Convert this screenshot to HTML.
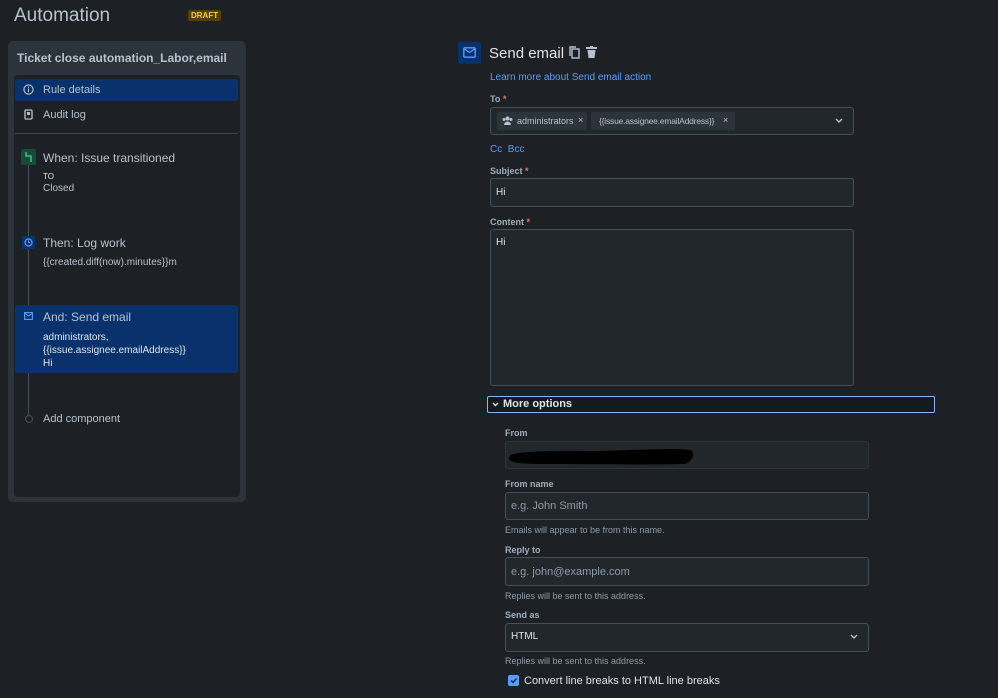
<!DOCTYPE html>
<html><head><meta charset="utf-8"><style>
*{box-sizing:border-box;margin:0;padding:0}
body{width:998px;height:698px;background:#1d2125;font-family:"Liberation Sans",sans-serif;color:#b6c2cf;position:relative;overflow:hidden;font-size:11px}
.a{position:absolute}
.in{position:absolute;background:#22272b;border:1px solid #454f59;border-radius:3px}
.lbl{position:absolute;font-size:9px;font-weight:bold;color:#9fadbc}
.req{color:#f87168}
.help{position:absolute;font-size:9px;color:#8c9bab}
.ph{color:#8c9bab;font-size:11px}
</style></head><body>
<div class="a" style="left:14px;top:5px;font-size:19px;color:#b6c2cf">Automation</div>
<div class="a" style="left:188px;top:10px;background:#533f04;color:#f5cd47;font-size:8px;font-weight:bold;padding:1px 3px;border-radius:2px">DRAFT</div>

<div class="a" style="left:8px;top:41px;width:238px;height:461px;background:#2c333a;border-radius:5px"></div>
<div class="a" style="left:17px;top:51px;font-size:12px;font-weight:bold;color:#b6c2cf">Ticket close automation_Labor,email</div>
<div class="a" style="left:14px;top:75px;width:226px;height:422px;background:#1d2125;border-radius:4px"></div>
<div class="a" style="left:15px;top:79px;width:223px;height:22px;background:#09326c;border-radius:3px"></div>
<svg class="a" style="left:23px;top:84px" width="11" height="11" viewBox="0 0 12 12"><circle cx="6" cy="6" r="5" fill="none" stroke="#b6c2cf" stroke-width="1.3"/><rect x="5.4" y="5" width="1.2" height="4" fill="#b6c2cf"/><rect x="5.4" y="3" width="1.2" height="1.2" fill="#b6c2cf"/></svg>
<div class="a" style="left:43px;top:84px;font-size:11px;color:#b6c2cf">Rule details</div>
<svg class="a" style="left:24px;top:109px" width="9" height="11" viewBox="0 0 9 11"><rect x="1" y="1" width="7" height="9" rx="1" fill="none" stroke="#b6c2cf" stroke-width="1.3"/><rect x="3" y="3" width="3" height="3" fill="#b6c2cf"/></svg>
<div class="a" style="left:43px;top:109px;font-size:11px">Audit log</div>
<div class="a" style="left:15px;top:133px;width:223px;height:1px;background:#3b444c"></div>

<div class="a" style="left:28px;top:160px;width:1px;height:262px;background:#454f59"></div>
<div class="a" style="left:21px;top:149px;width:15px;height:16px;background:#164b35;border-radius:2px"></div>
<svg class="a" style="left:23px;top:151px" width="11" height="12" viewBox="0 0 11 12"><path d="M3 1v4h5v6" fill="none" stroke="#4bce97" stroke-width="1.3"/></svg>
<div class="a" style="left:43px;top:151px;font-size:12px">When: Issue transitioned</div>
<div class="a" style="left:43px;top:172px;font-size:8px;color:#dee4ea">TO</div>
<div class="a" style="left:43px;top:183px;font-size:10px">Closed</div>

<div class="a" style="left:22px;top:236px;width:13px;height:13px;background:#09326c;border-radius:2px"></div>
<svg class="a" style="left:24px;top:238px" width="9" height="9" viewBox="0 0 9 9"><circle cx="4.5" cy="4.5" r="3.5" fill="none" stroke="#579dff" stroke-width="1.2"/><path d="M4.5 2.5v2h1.5" fill="none" stroke="#579dff" stroke-width="1"/></svg>
<div class="a" style="left:43px;top:236px;font-size:12px">Then: Log work</div>
<div class="a" style="left:43px;top:257px;font-size:10px">{{created.diff(now).minutes}}m</div>

<div class="a" style="left:15px;top:305px;width:223px;height:68px;background:#09326c;border-radius:3px"></div>
<svg class="a" style="left:24px;top:312px" width="9" height="8" viewBox="0 0 9 8"><rect x=".6" y=".6" width="7.8" height="6.8" fill="none" stroke="#579dff" stroke-width="1.1"/><path d="M1 1.5l3.5 2.5 3.5-2.5" fill="none" stroke="#579dff" stroke-width="1"/></svg>
<div class="a" style="left:43px;top:310px;font-size:12px">And: Send email</div>
<div class="a" style="left:43px;top:331px;font-size:10px;line-height:13px;color:#dee4ea">administrators,<br>{{issue.assignee.emailAddress}}<br>Hi</div>
<div class="a" style="left:25px;top:415px;width:8px;height:8px;border:1px solid #454f59;border-radius:50%;background:#1d2125"></div>
<div class="a" style="left:43px;top:413px;font-size:11px">Add component</div>

<div class="a" style="left:458px;top:42px;width:23px;height:22px;background:#09326c;border-radius:2px"></div>
<svg class="a" style="left:463px;top:47px" width="13" height="11" viewBox="0 0 13 11"><rect x=".8" y=".8" width="11.4" height="9.4" rx="1" fill="none" stroke="#579dff" stroke-width="1.4"/><path d="M1.5 2l5 3.5 5-3.5" fill="none" stroke="#579dff" stroke-width="1.3"/></svg>
<div class="a" style="left:489px;top:45px;font-size:15px;color:#dee4ea">Send email</div>
<svg class="a" style="left:569px;top:46px" width="11" height="13" viewBox="0 0 11 13"><rect x="3" y="3" width="7" height="9" fill="none" stroke="#b6c2cf" stroke-width="1.4"/><path d="M1 10V1h6" fill="none" stroke="#b6c2cf" stroke-width="1.4"/></svg>
<svg class="a" style="left:586px;top:46px" width="11" height="12" viewBox="0 0 11 12"><rect x="0" y="1" width="11" height="2" fill="#b6c2cf"/><rect x="4" y="0" width="3" height="1.5" fill="#b6c2cf"/><path d="M1.5 4h8l-1 8h-6z" fill="#b6c2cf"/></svg>
<div class="a" style="left:490px;top:72px;font-size:10px;color:#579dff">Learn more about Send email action</div>

<div class="lbl" style="left:490px;top:94px">To <span class="req">*</span></div>
<div class="in" style="left:490px;top:107px;width:364px;height:28px"></div>
<div class="a" style="left:497px;top:112px;width:90px;height:18px;background:#2c333a;border-radius:2px"></div>
<svg class="a" style="left:502px;top:116px" width="11" height="9" viewBox="0 0 11 9"><circle cx="5.5" cy="2.5" r="2" fill="#b6c2cf"/><circle cx="2" cy="3.5" r="1.5" fill="#b6c2cf"/><circle cx="9" cy="3.5" r="1.5" fill="#b6c2cf"/><path d="M2 9a3.5 3.5 0 017 0z" fill="#b6c2cf"/></svg>
<div class="a" style="left:517px;top:116px;font-size:9px">administrators</div>
<div class="a" style="left:578px;top:115px;font-size:9px">×</div>
<div class="a" style="left:591px;top:112px;width:144px;height:18px;background:#2c333a;border-radius:2px"></div>
<div class="a" style="left:599px;top:116px;font-size:8.5px;letter-spacing:-0.2px">{{issue.assignee.emailAddress}}</div>
<div class="a" style="left:723px;top:115px;font-size:9px">×</div>
<svg class="a" style="left:835px;top:118px" width="8" height="6" viewBox="0 0 8 6"><path d="M1 1l3 3 3-3" fill="none" stroke="#b6c2cf" stroke-width="1.4"/></svg>
<div class="a" style="left:490px;top:144px;font-size:10px;color:#579dff">Cc&nbsp; Bcc</div>

<div class="lbl" style="left:490px;top:166px">Subject <span class="req">*</span></div>
<div class="in" style="left:490px;top:178px;width:364px;height:29px"></div>
<div class="a" style="left:496px;top:187px;font-size:10px;color:#dee4ea">Hi</div>
<div class="lbl" style="left:490px;top:217px">Content <span class="req">*</span></div>
<div class="in" style="left:490px;top:229px;width:364px;height:157px"></div>
<div class="a" style="left:496px;top:237px;font-size:10px;color:#dee4ea">Hi</div>

<div class="a" style="left:487px;top:396px;width:448px;height:17px;border:1.5px solid #85b8ff;border-radius:2px;background:#161a1d"></div>
<svg class="a" style="left:492px;top:402px" width="7" height="5" viewBox="0 0 7 5"><path d="M1 1l2.5 2.5L6 1" fill="none" stroke="#dee4ea" stroke-width="1.4"/></svg>
<div class="a" style="left:503px;top:398px;font-size:11px;font-weight:bold;color:#dee4ea">More options</div>

<div class="lbl" style="left:505px;top:428px">From</div>
<div class="a" style="left:505px;top:441px;width:364px;height:28px;background:#22272b;border:1px solid #2c333a;border-radius:3px"></div>
<svg class="a" style="left:507px;top:445px" width="188" height="22" viewBox="0 0 188 22"><path d="M3 10C20 5 60 6 90 6 130 5 170 3 184 5 188 9 186 16 178 19 130 20 80 19 40 19 15 19 3 18 2 14z" fill="#000"/></svg>
<div class="lbl" style="left:505px;top:479px">From name</div>
<div class="in" style="left:505px;top:492px;width:364px;height:28px"></div>
<div class="a ph" style="left:511px;top:500px">e.g. John Smith</div>
<div class="help" style="left:505px;top:525px">Emails will appear to be from this name.</div>
<div class="lbl" style="left:505px;top:545px">Reply to</div>
<div class="in" style="left:505px;top:557px;width:364px;height:29px"></div>
<div class="a ph" style="left:511px;top:566px">e.g. john@example.com</div>
<div class="help" style="left:505px;top:591px">Replies will be sent to this address.</div>
<div class="lbl" style="left:505px;top:610px">Send as</div>
<div class="in" style="left:505px;top:623px;width:364px;height:29px"></div>
<div class="a" style="left:511px;top:631px;font-size:10px;color:#dee4ea">HTML</div>
<svg class="a" style="left:850px;top:634px" width="8" height="6" viewBox="0 0 8 6"><path d="M1 1l3 3 3-3" fill="none" stroke="#b6c2cf" stroke-width="1.4"/></svg>
<div class="help" style="left:505px;top:656px">Replies will be sent to this address.</div>
<div class="a" style="left:508px;top:675px;width:11px;height:11px;background:#579dff;border-radius:2px"></div>
<svg class="a" style="left:509px;top:676px" width="9" height="9" viewBox="0 0 9 9"><path d="M2 4.5l2 2 3.5-4" fill="none" stroke="#1d2125" stroke-width="1.4"/></svg>
<div class="a" style="left:524px;top:675px;font-size:11px;color:#dee4ea">Convert line breaks to HTML line breaks</div>
</body></html>
